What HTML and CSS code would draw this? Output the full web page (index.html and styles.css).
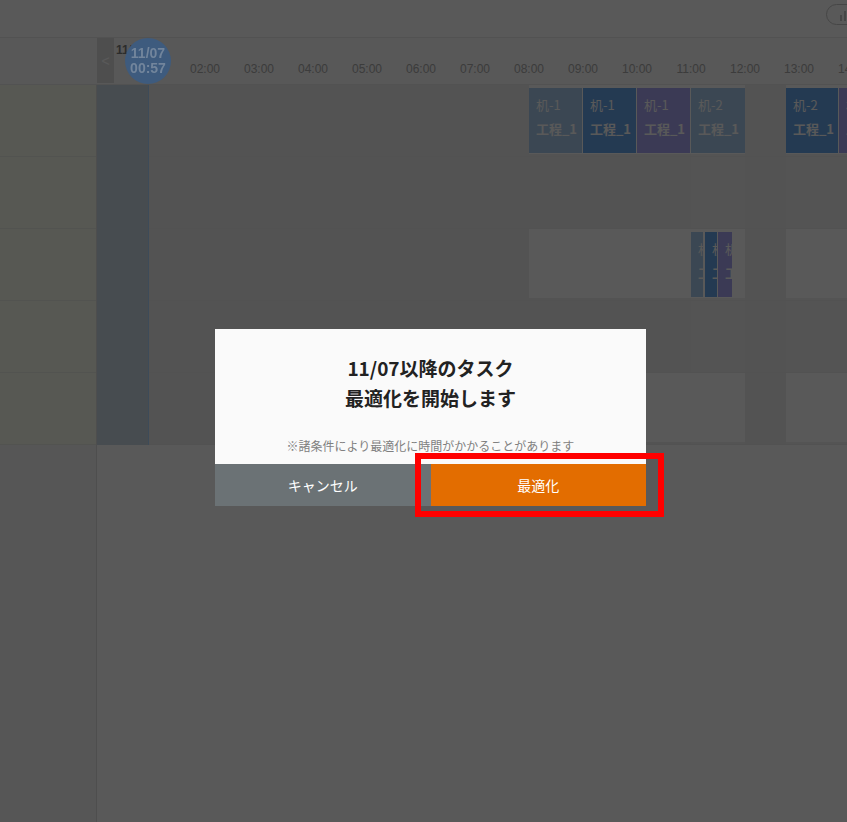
FILE: index.html
```html
<!DOCTYPE html>
<html lang="ja">
<head>
<meta charset="utf-8">
<title>生産スケジュール</title>
<link rel="stylesheet" href="styles.css">
</head>
<body>

<div class="topbar">
  <span class="chart-btn">
    <svg width="12" height="12" viewBox="0 0 12 12">
      <rect x="1" y="6" width="2" height="6" fill="#c8c8c8"/>
      <rect x="5" y="2" width="2" height="10" fill="#c8c8c8"/>
      <rect x="9" y="4" width="2" height="8" fill="#c8c8c8"/>
    </svg>
  </span>
</div>

<div class="header">
  <div class="side-head"></div>
  <div class="time-head">
    <button class="prev">&lt;</button>
    <span class="day">11/07</span>
    <div class="hours">
      <span style="left:54px">01:00</span>
      <span style="left:108px">02:00</span>
      <span style="left:162px">03:00</span>
      <span style="left:216px">04:00</span>
      <span style="left:270px">05:00</span>
      <span style="left:324px">06:00</span>
      <span style="left:378px">07:00</span>
      <span style="left:432px">08:00</span>
      <span style="left:486px">09:00</span>
      <span style="left:540px">10:00</span>
      <span style="left:594px">11:00</span>
      <span style="left:648px">12:00</span>
      <span style="left:702px">13:00</span>
      <span style="left:756px">14:00</span>
    </div>
    <div class="now">11/07<br>00:57</div>
  </div>
</div>

<div class="board">
  <div class="side">
    <div class="side-row"></div>
    <div class="side-row"></div>
    <div class="side-row"></div>
    <div class="side-row"></div>
    <div class="side-row"></div>
  </div>
  <div class="chart">
    <div class="band" style="left:594px;width:54px"></div>
    <div class="band" style="left:689px;width:70px"></div>
    <div class="past"></div>

    <div class="row">
      <div class="bar" style="left:432px;width:216px">
        <div class="task a" style="left:0;width:53px"><span>机-1</span><b>工程_1</b></div>
        <div class="task b" style="left:54px;width:53px"><span>机-1</span><b>工程_1</b></div>
        <div class="task c" style="left:108px;width:53px"><span>机-1</span><b>工程_1</b></div>
        <div class="task a" style="left:162px;width:54px"><span>机-2</span><b>工程_1</b></div>
      </div>
      <div class="bar" style="left:689px;width:70px">
        <div class="task b" style="left:0;width:52px"><span>机-2</span><b>工程_1</b></div>
        <div class="task c" style="left:53px;width:17px"><span>机-2</span><b>工程_1</b></div>
      </div>
    </div>
    <div class="row"></div>
    <div class="row">
      <div class="bar" style="left:432px;width:216px">
        <div class="task a" style="left:162px;width:12px"><span>机-1</span><b>工程_1</b></div>
        <div class="task b" style="left:176px;width:12px"><span>机-1</span><b>工程_1</b></div>
        <div class="task c" style="left:189px;width:14px"><span>机-1</span><b>工程_1</b></div>
      </div>
      <div class="bar" style="left:689px;width:70px"></div>
    </div>
    <div class="row"></div>
    <div class="row">
      <div class="bar" style="left:432px;width:216px"></div>
      <div class="bar" style="left:689px;width:70px"></div>
    </div>
  </div>
</div>

<div class="footer">
  <div class="foot-side"></div>
  <div class="foot-main"></div>
</div>

<div class="mask"></div>

<div class="dialog">
  <div class="dialog-body">
    <h2>11/07以降のタスク<br>最適化を開始します</h2>
    <p>※諸条件により最適化に時間がかかることがあります</p>
  </div>
  <div class="dialog-actions">
    <button class="btn-cancel">キャンセル</button>
    <button class="btn-ok">最適化</button>
  </div>
</div>

<div class="mark"></div>

</body>
</html>
```

FILE: styles.css
```css
body {
  margin: 0;
  width: 847px;
  height: 822px;
  overflow: hidden;
  background: #fff;
  font-family: "Noto Sans CJK JP", "Liberation Sans", sans-serif;
}

.topbar {
  height: 37px;
  border-bottom: 1px solid #eaeaea;
  display: flex;
  justify-content: flex-end;
  align-items: flex-start;
  overflow: hidden;
  background: #fff;
}

.chart-btn {
  box-sizing: border-box;
  width: 51px;
  height: 21px;
  margin-top: 4px;
  margin-right: -30px;
  padding-left: 12px;
  border: 1px solid #c8c8c8;
  border-radius: 11px;
  display: flex;
  align-items: center;
  flex: none;
}

.header {
  height: 46px;
  border-bottom: 1px solid #eaeaea;
  display: flex;
  background: #fbfbfb;
}

.side-head {
  width: 97px;
  flex: none;
}

.time-head {
  flex: 1;
  position: relative;
  display: flex;
  align-items: flex-start;
}

.prev {
  width: 17px;
  height: 45px;
  padding: 0;
  border: none;
  background: #dfdfdf;
  color: #fff;
  font: 14px "Liberation Sans", sans-serif;
  position: relative;
  z-index: 1;
}

.day {
  margin: 5px 0 0 2px;
  font: bold 12px/14px "Liberation Sans", sans-serif;
  color: #7e7e7e;
}

.hours {
  position: absolute;
  top: 0;
  left: 0;
  right: 0;
  bottom: 0;
  overflow: hidden;
}

.hours span {
  position: absolute;
  top: 24px;
  transform: translateX(-50%);
  font: 12px/14px "Liberation Sans", sans-serif;
  color: #ababab;
}

.now {
  position: absolute;
  left: 28px;
  top: 0;
  width: 46px;
  height: 46px;
  box-sizing: border-box;
  padding-top: 8px;
  border-radius: 50%;
  background: #3e5b7e;
  color: #72859c;
  font: bold 14px/15px "Liberation Sans", sans-serif;
  text-align: center;
  z-index: 11;
}

.board {
  display: flex;
}

.side {
  width: 96px;
  flex: none;
  border-right: 1px solid #dfdfdf;
}

.side-row {
  height: 71px;
  border-bottom: 1px solid #eceee4;
  background: #f9fced;
}

.chart {
  flex: 1;
  position: relative;
  overflow: hidden;
  background: #ededed;
}

.band {
  position: absolute;
  top: 0;
  bottom: 0;
  background: #f0f0f0;
}

.past {
  position: absolute;
  left: 0;
  top: 0;
  bottom: 0;
  width: 51px;
  background: #cbd9e5;
  border-right: 1px solid #aed6ff;
  z-index: 2;
}

.row {
  height: 71px;
  border-bottom: 1px solid #ebebeb;
  position: relative;
}

.bar {
  position: absolute;
  top: 0;
  height: 69px;
  background: #fefefe;
}

.task {
  position: absolute;
  top: 3px;
  height: 65px;
  box-sizing: border-box;
  padding: 5px 0 0 7px;
  overflow: hidden;
  white-space: nowrap;
  color: #fff;
  font-size: 13px;
  line-height: 24px;
}

.task span,
.task b {
  display: block;
}

.task.a { background: #a9cbed; }
.task.b { background: #67a6eb; }
.task.c { background: #a9a6f3; }

.footer {
  display: flex;
  height: 377px;
}

.foot-side {
  width: 96px;
  flex: none;
  border-right: 1px solid #dfdfdf;
  background: #f6f6f6;
}

.foot-main {
  flex: 1;
  background: #fff;
}

.mask {
  position: fixed;
  top: 0;
  left: 0;
  right: 0;
  bottom: 0;
  background: rgba(0, 0, 0, 0.65);
  z-index: 10;
}

.dialog {
  position: fixed;
  left: 215px;
  top: 329px;
  width: 431px;
  background: #fafafa;
  text-align: center;
  z-index: 20;
}

.dialog-body {
  padding: 24px 0 9px;
}

.dialog h2 {
  margin: 0;
  font-size: 19px;
  line-height: 30px;
  font-weight: bold;
  color: #222;
}

.dialog p {
  margin: 24px 0 0;
  font-size: 12px;
  line-height: 18px;
  color: #808080;
}

.dialog-actions {
  display: flex;
}

.dialog-actions button {
  flex: 1;
  height: 42px;
  border: none;
  color: #fff;
  font: 14px "Noto Sans CJK JP", sans-serif;
  cursor: pointer;
}

.btn-cancel {
  background: #6b7275;
}

.btn-ok {
  background: #e36d00;
}

.mark {
  position: fixed;
  left: 415px;
  top: 453px;
  width: 249px;
  height: 64px;
  box-sizing: border-box;
  border: 6px solid #f00;
  z-index: 30;
}
```
